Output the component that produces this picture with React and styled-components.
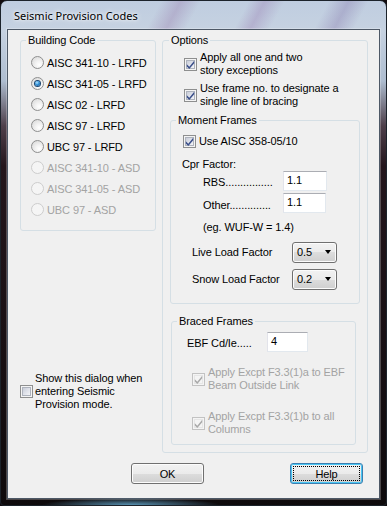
import React from 'react';
import styled, { createGlobalStyle } from 'styled-components';

const Global = createGlobalStyle`
  html, body { margin: 0; padding: 0; background: #120c0f; }
  body {
    width: 387px; height: 506px; overflow: hidden;
    font-family: "Liberation Sans", Arial, sans-serif; font-size: 11px; color: #000;
  }
  #root { width: 387px; height: 506px; }
`;

const Window = styled.div`
  position: relative;
  width: 387px; height: 506px; box-sizing: border-box;
  display: flex; flex-direction: column;
  border: 1px solid #1c232b;
  border-radius: 7px 7px 4px 4px;
  padding: 0 6px 6px 6px;
  background-color: #1d1418;
  background-image: linear-gradient(180deg, #bfcde0 0px, #c6d2e1 30px, #aebdd0 80px, #4e3f4a 125px, #24161c 165px, #0e0a0c 506px);
`;

const BottomGlow = styled.div`
  position: absolute; left: 40px; bottom: 0; width: 180px; height: 7px;
  background: radial-gradient(ellipse at 50% 100%, rgba(105, 180, 220, 0.8), rgba(105, 180, 220, 0) 70%);
  pointer-events: none;
`;

const TitleBar = styled.div`
  height: 28px; flex: none;
  margin: 0 -6px;
  display: flex; align-items: center;
  padding-left: 13px;
  font-family: "Noto Sans", "Open Sans", sans-serif; font-size: 11px;
  color: #000;
  border-radius: 6px 6px 0 0;
  text-shadow: 0 0 6px rgba(255, 255, 255, 0.95), 0 0 3px rgba(255, 255, 255, 0.9);
  background: linear-gradient(118deg, rgba(0,0,0,0) 40%, rgba(150, 120, 170, 0.35) 45%, rgba(0,0,0,0) 50%, rgba(0,0,0,0) 62%, rgba(150, 120, 175, 0.35) 66%, rgba(0,0,0,0) 71%, rgba(0,0,0,0) 82%, rgba(120, 100, 160, 0.3) 87%, rgba(0,0,0,0) 92%);
`;

const Client = styled.div`
  flex: 1; box-sizing: border-box;
  border: 1px solid #4d5866;
  background: #f0f0f0;
  display: flex; flex-direction: column;
  padding: 4px 0 0 12px;
  letter-spacing: -0.1px;
  box-shadow: 0 0 0 1px rgba(255, 255, 255, 0.25);
`;

const Columns = styled.div`
  display: grid;
  grid-template-columns: 136px 206px;
  column-gap: 6px;
  height: 419px;
`;

const LeftCol = styled.div`
  display: flex; flex-direction: column;
`;

const Group = styled.fieldset`
  margin: ${p => p.$margin || '0'};
  padding: 0;
  min-width: 0;
  box-sizing: border-box;
  width: ${p => (p.$w ? `${p.$w}px` : 'auto')};
  height: ${p => p.$h}px;
  border: 1px solid #d5dfe5;
  border-radius: 3px;
`;

const Legend = styled.legend`
  padding: 0 2px;
  margin-left: ${p => p.$ml ?? 5}px;
  line-height: 13px;
  font-size: 11px;
`;

const GroupBody = styled.div`
  display: flex; flex-direction: column;
  padding: ${p => p.$pad};
`;

const RadioRow = styled.div`
  height: 21px;
  display: flex; align-items: center;
  color: ${p => (p.$disabled ? '#a3a3a3' : '#000')};
`;

const RadioCircle = styled.span`
  width: 13px; height: 13px; box-sizing: border-box; flex: none;
  border-radius: 50%;
  margin-right: 3px;
  border: 1px solid ${p => (p.$disabled ? '#cdcdcd' : '#8e8f8f')};
  background: ${p =>
    p.$disabled
      ? '#f5f5f5'
      : 'radial-gradient(circle at 65% 70%, #ffffff 0, #f2f2f2 35%, #d4d4d4 100%)'};
  display: flex; align-items: center; justify-content: center;
  &::after {
    content: '';
    display: ${p => (p.$checked ? 'block' : 'none')};
    width: 5px; height: 5px; border-radius: 50%;
    background: radial-gradient(circle at 40% 35%, #b6e8ff 0, #2f8fd8 45%, #0d4a88 100%);
    box-shadow: 0 0 0 1px #1c4670;
  }
`;

const CheckRow = styled.div`
  display: flex; align-items: center;
  margin: ${p => p.$margin || '0'};
  color: ${p => (p.$disabled ? '#a3a3a3' : '#000')};
`;

const BoxOuter = styled.span`
  width: 13px; height: 13px; box-sizing: border-box; flex: none;
  margin-right: ${p => p.$gap ?? 3}px;
  border: 1px solid ${p => (p.$disabled ? '#c2c2c2' : '#8e8f8f')};
  padding: 1px;
  background: #f4f4f4;
  position: relative;
`;

const BoxInner = styled.span`
  display: block; width: 9px; height: 9px; box-sizing: border-box;
  border: 1px solid ${p => (p.$disabled ? '#e6e6e6' : '#aeb3bd')};
  background: ${p =>
    p.$disabled
      ? '#f4f4f4'
      : 'linear-gradient(135deg, #c9cdd8 0%, #dfe2ea 50%, #f3f4f7 100%)'};
`;

const Tick = styled.svg`
  position: absolute; left: 0; top: 0;
  width: 11px; height: 11px;
`;

const Lines = styled.div`
  line-height: 13px;
  white-space: nowrap;
`;

const Check = ({ checked, disabled, gap, children, margin }) => (
  <CheckRow $disabled={disabled} $margin={margin}>
    <BoxOuter $disabled={disabled} $gap={gap}>
      <BoxInner $disabled={disabled} />
      {checked && (
        <Tick viewBox="0 0 11 11">
          <path
            d="M1.8 5.2 L4.3 7.8 L9.2 1.8 L9.2 4.2 L4.3 10.1 L1.8 7.6 Z"
            fill={disabled ? '#a9a9a9' : '#3b4f8a'}
          />
        </Tick>
      )}
    </BoxOuter>
    <Lines>{children}</Lines>
  </CheckRow>
);

const Text = styled.div`
  line-height: 13px;
  margin: ${p => p.$margin || '0'};
  white-space: nowrap;
`;

const FieldRow = styled.div`
  display: flex; align-items: center;
  height: 20px;
  margin: ${p => p.$margin || '0'};
`;

const FieldLabel = styled.span`
  width: ${p => p.$w}px; flex: none;
  line-height: 13px;
  padding-top: ${p => p.$dy || 0}px;
  white-space: nowrap;
`;

const TextBox = styled.div`
  width: ${p => p.$w}px; height: 20px; box-sizing: border-box;
  background: #fff;
  border: 1px solid #e2e8ee;
  border-top-color: #abadb3;
  border-left-color: #e2e3ea;
  padding: 0 3px;
  line-height: 17px;
  font-size: 11px;
`;

const Combo = styled.div`
  width: 45px; height: 21px; box-sizing: border-box;
  border: 1px solid #707070; border-radius: 3px;
  background: linear-gradient(180deg, #f2f2f2 0%, #ebebeb 50%, #dddddd 50%, #cfcfcf 100%);
  box-shadow: inset 0 0 0 1px #fcfcfc;
  display: flex; align-items: center; justify-content: space-between;
  padding: 0 5px 0 4px;
`;

const Arrow = styled.span`
  width: 0; height: 0;
  border-left: 3.5px solid transparent;
  border-right: 3.5px solid transparent;
  border-top: 4px solid #000;
`;

const ButtonRow = styled.div`
  display: flex;
  gap: 86px;
  margin: 10px 0 0 111px;
`;

const Button = styled.div`
  width: 73px; height: 21px; box-sizing: border-box;
  border: 1px solid ${p => (p.$default ? '#3c7fb1' : '#707070')};
  border-radius: 3px;
  background: linear-gradient(180deg, #f2f2f2 0%, #ebebeb 50%, #dddddd 50%, #cfcfcf 100%);
  box-shadow: ${p => (p.$default ? 'inset 0 0 0 1px #48c6f4' : 'inset 0 0 0 1px #fcfcfc')};
  display: flex; align-items: center; justify-content: center;
  padding: 2px;
`;

const FocusRect = styled.span`
  flex: 1; align-self: stretch;
  display: flex; align-items: center; justify-content: center;
  border: 1px dotted ${p => (p.$on ? '#000' : 'transparent')};
`;

const radios = [
  { label: 'AISC 341-10 - LRFD' },
  { label: 'AISC 341-05 - LRFD', checked: true },
  { label: 'AISC 02 - LRFD' },
  { label: 'AISC 97 - LRFD' },
  { label: 'UBC 97 - LRFD' },
  { label: 'AISC 341-10 - ASD', disabled: true },
  { label: 'AISC 341-05 - ASD', disabled: true },
  { label: 'UBC 97 - ASD', disabled: true },
];

export default function App() {
  return (
    <>
      <Global />
      <Window>
        <TitleBar>Seismic Provision Codes</TitleBar>
        <Client>
          <Columns>
            <LeftCol>
              <Group $h={197}>
                <Legend>Building Code</Legend>
                <GroupBody $pad="5px 0 0 10px">
                  {radios.map(r => (
                    <RadioRow key={r.label} $disabled={r.disabled}>
                      <RadioCircle $checked={r.checked} $disabled={r.disabled} />
                      {r.label}
                    </RadioRow>
                  ))}
                </GroupBody>
              </Group>
              <Check margin="141px 0 0 0" gap={2}>
                Show this dialog when<br />entering Seismic<br />Provision mode.
              </Check>
            </LeftCol>

            <Group $h={419}>
              <Legend $ml={6}>Options</Legend>
              <GroupBody $pad="4px 0 0 7px">
                <Check checked margin="0 0 0 14px">
                  Apply all one and two<br />story exceptions
                </Check>
                <Check checked margin="5px 0 0 14px">
                  Use frame no. to designate a<br />single line of bracing
                </Check>

                <Group $h={190} $w={190} $margin="6px 0 0 0">
                  <Legend>Moment Frames</Legend>
                  <GroupBody $pad="8px 0 0 0">
                    <Check checked margin="0 0 0 12px">Use AISC 358-05/10</Check>
                    <Text $margin="10px 0 0 11px">Cpr Factor:</Text>
                    <FieldRow $margin="0 0 0 32px">
                      <FieldLabel $w={80} $dy={2}>RBS................</FieldLabel>
                      <TextBox $w={44}>1.1</TextBox>
                    </FieldRow>
                    <FieldRow $margin="2px 0 0 32px">
                      <FieldLabel $w={80} $dy={4}>Other..............</FieldLabel>
                      <TextBox $w={43}>1.1</TextBox>
                    </FieldRow>
                    <Text $margin="8px 0 0 32px">(eg. WUF-W = 1.4)</Text>
                    <FieldRow $margin="8px 0 0 21px">
                      <FieldLabel $w={100}>Live Load Factor</FieldLabel>
                      <Combo>0.5<Arrow /></Combo>
                    </FieldRow>
                    <FieldRow $margin="7px 0 0 21px">
                      <FieldLabel $w={100}>Snow Load Factor</FieldLabel>
                      <Combo>0.2<Arrow /></Combo>
                    </FieldRow>
                  </GroupBody>
                </Group>

                <Group $h={130} $w={185} $margin="11px 0 0 1px">
                  <Legend>Braced Frames</Legend>
                  <GroupBody $pad="4px 0 0 0">
                    <FieldRow $margin="0 0 0 15px">
                      <FieldLabel $w={80} $dy={2}>EBF Cd/Ie.....</FieldLabel>
                      <TextBox $w={41}>4</TextBox>
                    </FieldRow>
                    <Check checked disabled margin="14px 0 0 20px">
                      Apply Excpt F3.3(1)a to EBF<br />Beam Outside Link
                    </Check>
                    <Check checked disabled margin="18px 0 0 20px">
                      Apply Excpt F3.3(1)b to all<br />Columns
                    </Check>
                  </GroupBody>
                </Group>
              </GroupBody>
            </Group>
          </Columns>

          <ButtonRow>
            <Button><FocusRect>OK</FocusRect></Button>
            <Button $default><FocusRect $on>Help</FocusRect></Button>
          </ButtonRow>
        </Client>
        <BottomGlow />
      </Window>
    </>
  );
}
